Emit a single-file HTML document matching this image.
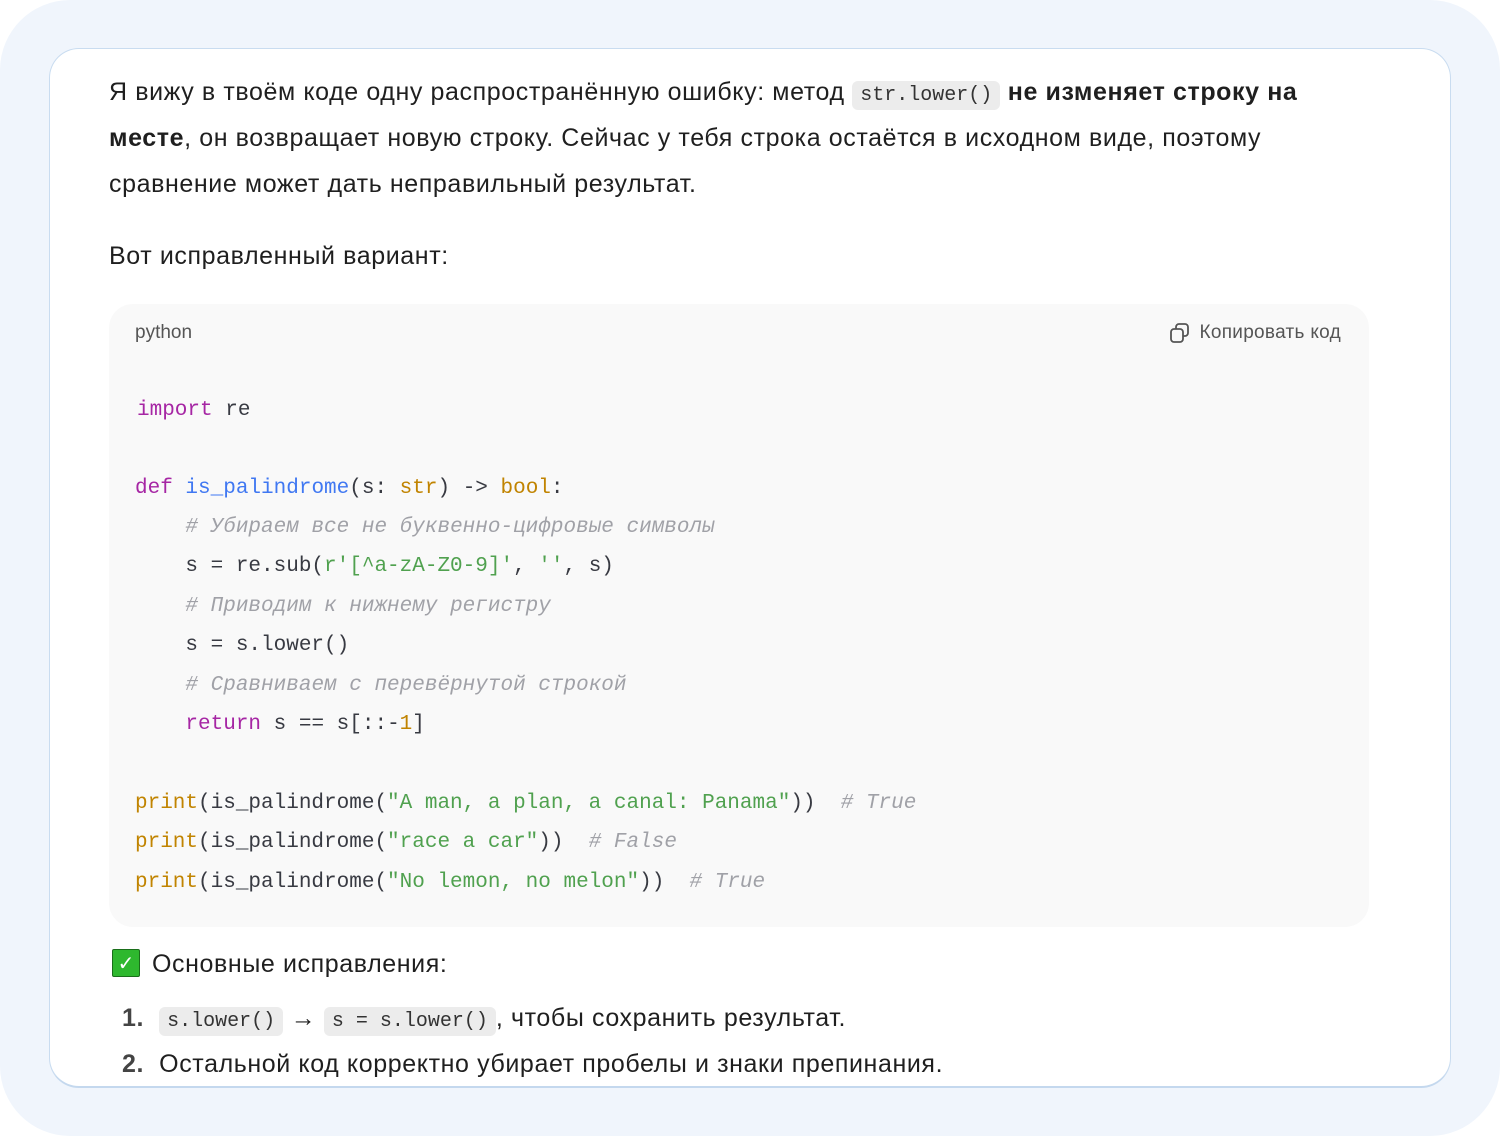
<!DOCTYPE html>
<html><head><meta charset="utf-8"><style>
html,body{margin:0;padding:0;background:#fff;}
#outer{position:absolute;left:0;top:0;width:1500px;height:1136px;background:#f0f5fc;border-radius:70px;overflow:hidden;}
#card{position:absolute;left:49px;top:48px;width:1400px;height:1037px;background:#fff;border:1px solid #c9dcf0;border-bottom:2px solid #c4d8ee;border-radius:30px;overflow:hidden;}
.t{position:absolute;left:59px;font-family:"Liberation Sans",sans-serif;font-size:25px;letter-spacing:0.6px;color:#1f1f1f;white-space:nowrap;line-height:30px;}
b{font-weight:bold;}
.ic{font-family:"Liberation Mono",monospace;font-size:20px;letter-spacing:0;background:#ececec;border-radius:6px;padding:3px 8px;color:#333;}
#code{position:absolute;left:59px;top:255px;width:1260px;height:623px;background:#f9f9f9;border-radius:24px;}
.c{position:absolute;left:26px;font-family:"Liberation Mono",monospace;font-size:21px;color:#383a42;white-space:pre;line-height:26px;}
.k{color:#a626a4}.f{color:#4078f2}.y{color:#c18401}.s{color:#50a14f}.m{color:#a0a1a7;font-style:italic}
</style></head><body>
<div id="outer">
<div id="card">
<div class="t" style="top:28px">Я вижу в твоём коде одну распространённую ошибку: метод <span class="ic">str.lower()</span> <b>не изменяет строку на</b></div>
<div class="t" style="top:74px"><b>месте</b>, он возвращает новую строку. Сейчас у тебя строка остаётся в исходном виде, поэтому</div>
<div class="t" style="top:120px">сравнение может дать неправильный результат.</div>
<div class="t" style="top:192px">Вот исправленный вариант:</div>
<div id="code">
<div style="position:absolute;left:26px;top:18px;font-family:'Liberation Sans',sans-serif;font-size:19px;color:#555">python</div>
<div style="position:absolute;right:28px;top:18px;font-family:'Liberation Sans',sans-serif;font-size:19px;letter-spacing:0.3px;color:#555;display:flex;align-items:center;gap:8px">
<svg width="22" height="22" viewBox="0 0 22 22" fill="none" stroke="#555" stroke-width="1.8"><rect x="2" y="7" width="12" height="13" rx="3"/><path d="M7 7V5a3 3 0 0 1 3-3h6a3 3 0 0 1 3 3v6a3 3 0 0 1-3 3h-2"/></svg>Копировать код</div>
<div class="c" style="top:94px;left:28px"><span class="k">import</span> re</div>
<div class="c" style="top:172px"><span class="k">def</span> <span class="f">is_palindrome</span>(s: <span class="y">str</span>) -&gt; <span class="y">bool</span>:</div>
<div class="c" style="top:211px">    <span class="m"># Убираем все не буквенно-цифровые символы</span></div>
<div class="c" style="top:250px">    s = re.sub(<span class="s">r'[^a-zA-Z0-9]'</span>, <span class="s">''</span>, s)</div>
<div class="c" style="top:290px">    <span class="m"># Приводим к нижнему регистру</span></div>
<div class="c" style="top:329px">    s = s.lower()</div>
<div class="c" style="top:369px">    <span class="m"># Сравниваем с перевёрнутой строкой</span></div>
<div class="c" style="top:408px">    <span class="k">return</span> s == s[::-<span class="y">1</span>]</div>
<div class="c" style="top:487px"><span class="y">print</span>(is_palindrome(<span class="s">"A man, a plan, a canal: Panama"</span>))  <span class="m"># True</span></div>
<div class="c" style="top:526px"><span class="y">print</span>(is_palindrome(<span class="s">"race a car"</span>))  <span class="m"># False</span></div>
<div class="c" style="top:566px"><span class="y">print</span>(is_palindrome(<span class="s">"No lemon, no melon"</span>))  <span class="m"># True</span></div>
</div>
<div style="position:absolute;left:62px;top:900px;width:26px;height:26px;background:#2eb82e;border:1px solid #1a6e1a;border-radius:2px;color:#fff;font-size:20px;line-height:26px;text-align:center;font-family:'DejaVu Sans',sans-serif">✓</div>
<div class="t" style="top:900px;left:102px">Основные исправления:</div>
<div class="t" style="top:954px;left:72px"><b style="color:#444">1.</b>&nbsp;&nbsp;<span class="ic">s.lower()</span> → <span class="ic">s = s.lower()</span>, чтобы сохранить результат.</div>
<div class="t" style="top:1000px;left:72px"><b style="color:#444">2.</b>&nbsp;&nbsp;Остальной код корректно убирает пробелы и знаки препинания.</div>
</div>
</div>
</body></html>
